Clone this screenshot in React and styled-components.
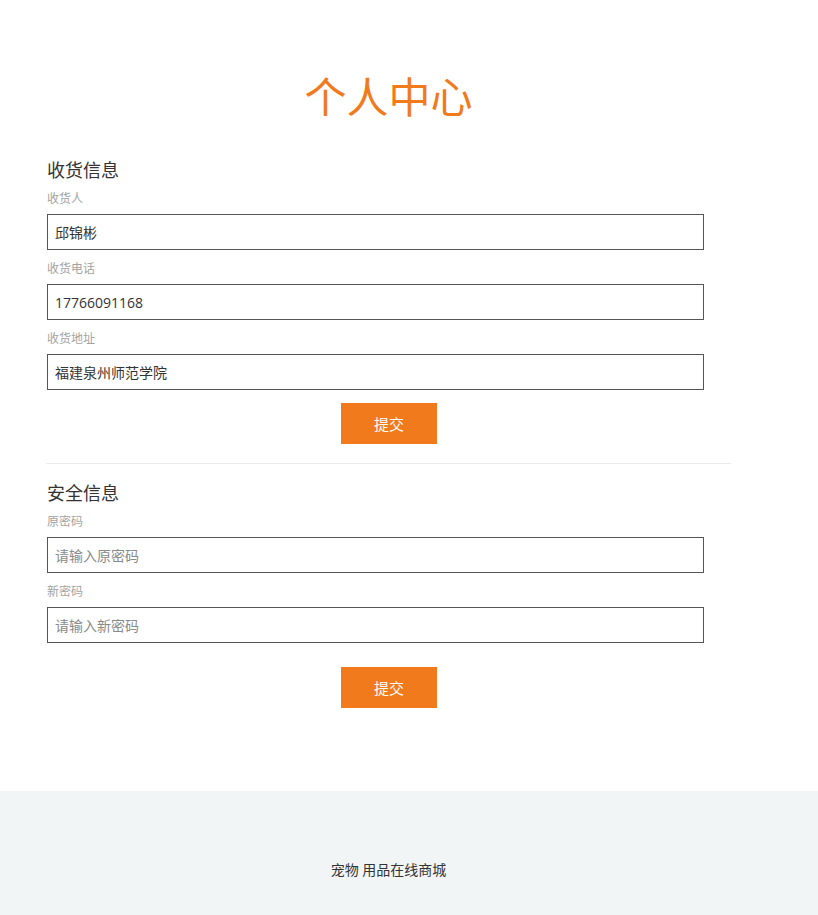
import React from 'react'
import styled, { createGlobalStyle } from 'styled-components'

const GlobalStyle = createGlobalStyle`
  * { box-sizing: border-box; }
  body {
    margin: 0;
    background: #fff;
    font-family: "Open Sans", "Noto Sans CJK SC", sans-serif;
    color: #333;
  }
`

const Page = styled.div`
  display: flex;
  flex-direction: column;
  min-height: 915px;
`

const Main = styled.main`
  width: 731px;
  padding: 72px 0 83px 46px;
`

const Title = styled.h1`
  margin: 0 0 36px;
  font-size: 42px;
  line-height: 50px;
  font-weight: 400;
  color: #f07a1c;
  text-align: center;
`

const Section = styled.section`
  display: flex;
  flex-direction: column;
  padding-left: 1px;
`

const Heading = styled.h2`
  margin: 0 0 8px;
  font-size: 18px;
  line-height: 24px;
  font-weight: 400;
  color: #333;
`

const Fields = styled.div`
  display: flex;
  flex-direction: column;
  gap: 10px;
`

const Field = styled.label`
  display: flex;
  flex-direction: column;
  gap: 6px;
`

const Label = styled.span`
  font-size: 12px;
  line-height: 18px;
  color: #a3a3a3;
`

const Input = styled.input`
  width: 657px;
  height: 36px;
  padding: 0 7px;
  border: 1px solid #555;
  border-radius: 0;
  font-family: inherit;
  font-size: 14px;
  color: #333;
  outline: none;
  &::placeholder {
    color: #8a8a8a;
  }
`

const Actions = styled.div`
  display: flex;
  justify-content: center;
  margin-top: ${p => p.$gap}px;
`

const Button = styled.button`
  width: 96px;
  height: 41px;
  border: none;
  background: #f07a1c;
  color: #fff;
  font-family: inherit;
  font-size: 15px;
  cursor: pointer;
`

const Divider = styled.hr`
  margin: 19px 0 17px;
  border: none;
  border-top: 1px solid #ebebeb;
`

const Footer = styled.footer`
  flex: 1;
  background: #f2f5f6;
  padding-top: 69px;
`

const FooterInner = styled.div`
  width: 731px;
  padding-left: 46px;
  text-align: center;
  font-size: 14px;
  line-height: 20px;
  color: #333;
`

const App = () => (
  <Page>
    <GlobalStyle />
    <Main>
      <Title>个人中心</Title>
      <Section>
        <Heading>收货信息</Heading>
        <Fields>
          <Field>
            <Label>收货人</Label>
            <Input defaultValue="邱锦彬" />
          </Field>
          <Field>
            <Label>收货电话</Label>
            <Input defaultValue="17766091168" />
          </Field>
          <Field>
            <Label>收货地址</Label>
            <Input defaultValue="福建泉州师范学院" />
          </Field>
        </Fields>
        <Actions $gap={13}>
          <Button>提交</Button>
        </Actions>
      </Section>
      <Divider />
      <Section>
        <Heading>安全信息</Heading>
        <Fields>
          <Field>
            <Label>原密码</Label>
            <Input type="text" placeholder="请输入原密码" />
          </Field>
          <Field>
            <Label>新密码</Label>
            <Input type="text" placeholder="请输入新密码" />
          </Field>
        </Fields>
        <Actions $gap={24}>
          <Button>提交</Button>
        </Actions>
      </Section>
    </Main>
    <Footer>
      <FooterInner>宠物 用品在线商城</FooterInner>
    </Footer>
  </Page>
)

export default App
